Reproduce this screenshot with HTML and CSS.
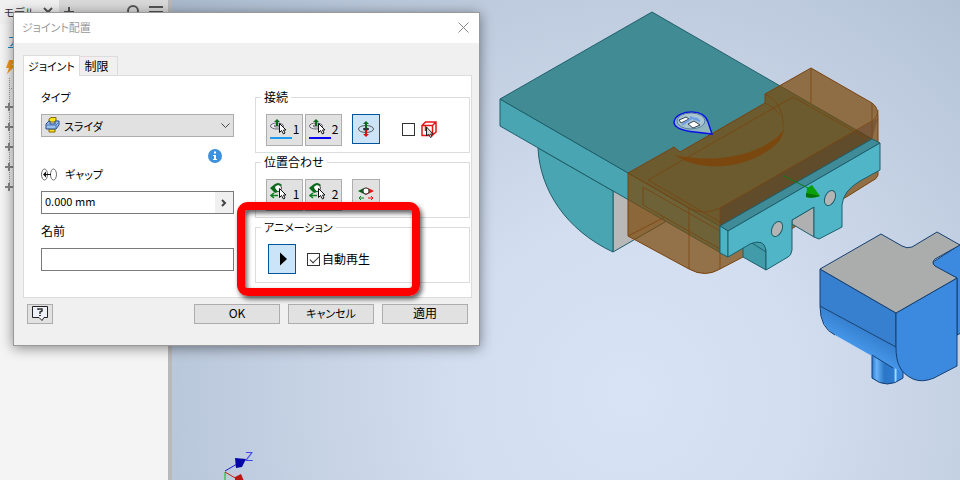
FILE: index.html
```html
<!DOCTYPE html>
<html lang="ja">
<head>
    <meta charset="UTF-8">
    <meta name="viewport" content="width=device-width, initial-scale=1.0">
    <title>ジョイント配置</title>
    <link rel="stylesheet" href="styles.css">
</head>
<body>

    <div class="app">
        <aside class="browser">
            <div class="browser-tabs">
                <div class="browser-tab">
                    <span>モデル</span>
                    <svg width="10" height="10" viewBox="0 0 10 10"><path d="M1 1l8 8M9 1L1 9" stroke="#555" stroke-width="2"/></svg>
                </div>
                <svg class="add" width="10" height="10" viewBox="0 0 10 10"><path d="M5 0v10M0 5h10" stroke="#555" stroke-width="2"/></svg>
                <svg width="14" height="16" viewBox="0 0 14 16"><circle cx="7" cy="7" r="5" fill="none" stroke="#555" stroke-width="2"/><path d="M4 11l-3 4" stroke="#555" stroke-width="2"/></svg>
                <svg width="14" height="14" viewBox="0 0 14 14"><path d="M0 2h14M0 7h14M0 12h14" stroke="#555" stroke-width="2"/></svg>
            </div>
            <a class="assembly" href="#">ア</a>
            <svg class="tree" width="16" height="140" viewBox="0 0 16 140">
                <path d="M9 0h6l-3 5h4L7 14l2-6H6z" fill="#f39a12"/>
                <path d="M9.500 18v113M9 28.500h5" stroke="#999" stroke-dasharray="1 1"/>
                <path d="M9 43v8M5 47h8M9 63v8M5 67h8M9 83v8M5 87h8M9 103v8M5 107h8M9 123v8M5 127h8" stroke="#888" stroke-width="2"/>
            </svg>
        </aside>

        <main class="viewport">
            <svg class="scene" viewBox="172 0 788 480" preserveAspectRatio="xMinYMin slice">
                <defs>
                    <linearGradient id="fillet" x1="850" y1="322" x2="838" y2="343" gradientUnits="userSpaceOnUse">
                        <stop offset="0" stop-color="#3680cf"/>
                        <stop offset="1" stop-color="#4a9cf0"/>
                    </linearGradient>
                    <linearGradient id="pin">
                        <stop offset="0" stop-color="#2c78cc"/>
                        <stop offset=".15" stop-color="#67b2f8"/>
                        <stop offset=".4" stop-color="#2b76c6"/>
                        <stop offset=".7" stop-color="#2e7bd0"/>
                        <stop offset=".76" stop-color="#9fdcff"/>
                        <stop offset=".82" stop-color="#3a8ae0"/>
                    </linearGradient>
                </defs>

                <!-- plate -->
                <g stroke="#1f5f6a" stroke-linejoin="round">
                    <path d="M613 191V252L665 222V205z" fill="#b8b8b8"/>
                    <path d="M538 148C540 190 566 230 613 252V191z" fill="#4aa5b2"/>
                    <path d="M500 99V126L728 257V231L720 226z" fill="#4aa5b2"/>
                    <path d="M652 12L500 99L720 226L872 139z" fill="#418b95"/>
                </g>

                <!-- transparent block -->
                <path d="M811 68L872 103Q878 107 878 116V175Q877 179 872 181L848 196L743 257L720 269Q705 278 689 269L628 236V173L674 147L680 152L765 103V94z" fill="#7b4808" fill-opacity=".72" stroke="#7a430f"/>
                <path d="M720 208L878 118L872 139L720 226z" fill="#4a2a20" fill-opacity=".3"/>
                <path d="M674 155C698 160 730 161 757 149C775 141 783 133 784 127C784 139 775 148 757 157C732 169 700 171 674 155z" fill="#7a480f"/>
                <g fill="none" stroke="#7a430f" stroke-opacity=".8">
                    <path d="M628 173L689 208Q705 216 720 208L872 121Q878 117 878 110M689 208V269M720 208V269"/>
                    <path d="M811 68V103M872 103V140M765 94C776 100 784 109 783 127M765 103C772 107 776 110 780 115M648 180L793 97L866 138M628 236L665 217"/>
                    <path d="M643 187V205L720 249M643 187L720 231M648 180L720 222"/>
                </g>

                <!-- bracket -->
                <g stroke="#1c5f6c" stroke-linejoin="round">
                    <path d="M792 220L814 207V237L792 224z" fill="#b0b0b0"/>
                    <path d="M743 257V242H766V270z" fill="#419ba8"/>
                    <path d="M720 226L872 139L880 143L728 231z" fill="#3f8b97"/>
                    <path d="M720 226L728 231V257L720 253z" fill="#4db3c4"/>
                    <path d="M728 231L880 143V170L860 181Q843 191 842 205V227L819 239L814 237V207L792 220V250Q791 256 788 257L766 270V250Q764 238 750 244L728 257z" fill="#50b5c6"/>
                    <path d="M752 243L766 252" fill="none"/>
                    <ellipse cx="830" cy="198" rx="5" ry="8" transform="rotate(24 830 198)" fill="#b4b4b4"/>
                    <ellipse cx="777" cy="229" rx="5" ry="8" transform="rotate(24 777 229)" fill="#b4b4b4"/>
                </g>
                <path d="M784 176L808 188" stroke="#0b7a14"/>
                <path d="M812 185L820 196Q812 199 806 197L807 188z" fill="#0aa00a"/>
                <path d="M806 193L820 196Q812 199 806 197z" fill="#087008"/>

                <!-- origin glyph -->
                <g stroke-width="1" stroke="#0a12e8" fill="#8fb5bf">
                    <path d="M674 122C675 115 684 112 692 112C700 112 706 116 708 122L712 134L695 132C684 131 674 129 674 122z" stroke-width="1.500"/>
                    <ellipse cx="691" cy="121" rx="14" ry="8" fill="#a9c6d0" stroke="#58809a"/>
                    <path d="M679 120L686 117L689 119L681 123zM688 124L694 121L700 125L693 128z" fill="#fff" stroke="#345"/>
                    <path d="M682 125L692 118L698 119M690 117L700 121" stroke="#6d9ce8" fill="none" stroke-width="2"/>
                </g>

                <!-- blue part -->
                <g stroke="#153f70" stroke-linejoin="round">
                    <path d="M872 355V378Q887 390 903 378V366z" fill="url(#pin)"/>
                    <path d="M961 244L933 262L934 266L957 278V335L961 333z" fill="#3b8ae0"/>
                    <path d="M820 306L896 347L900 370L893 368L872 356L835 335Q820 326 820 306z" fill="url(#fillet)" stroke="none"/>
                    <path d="M820 306Q820 328 835 335M872 355L893 368" fill="none"/>
                    <path d="M820 269L896 313V347L820 306z" fill="#3680cf"/>
                    <path d="M896 313L957 278V366L934 378Q922 383 913 379C900 373 896 363 896 347z" fill="#3b8ae0"/>
                    <path d="M820 269L881 234L902 246Q907 249 912 247L937 232L960 245L935 259Q931 263 935 266L957 278L896 313z" fill="#abadac"/>
                </g>

                <!-- triad -->
                <path d="M225 472V481" stroke="#0bbf0b"/>
                <path d="M225 471L237 464" stroke="#1a1acc"/>
                <path d="M225 472L237 479" stroke="#d01818"/>
                <path d="M235 458L246 459L242 467L236 468z" fill="#0505a5"/>
                <path d="M235 477L241 474L244 481H235z" fill="#bd1515"/>
                <text class="axis" x="245" y="461">Z</text>
            </svg>
        </main>

        <form class="dialog">
            <header class="titlebar">
                <h1>ジョイント配置</h1>
                <button type="button" class="close" aria-label="閉じる">
                    <svg width="11" height="11" viewBox="0 0 11 11"><path d="M.5.5l10 10M10.500.5l-10 10" stroke="#888"/></svg>
                </button>
            </header>

            <div class="tabs">
                <button type="button" class="tab active kana">ジョイント</button>
                <button type="button" class="tab">制限</button>
            </div>

            <div class="panel">
                <div class="settings">
                    <label for="type" class="kana">タイプ</label>
                    <div class="type-box">
                        <select id="type" class="kana">
                            <option>スライダ</option>
                        </select>
                        <svg class="type-icon" width="15" height="16" viewBox="0 0 15 16">
                            <path d="M4 2l2-1.500h5V5H4zM4 12h6v3H4z" fill="#ffe21a" stroke="#876a00"/>
                            <path d="M1 7l3-3h1v3h5V4h4v4l-3 4H1z" fill="#9cc0f0" stroke="#244a8c"/>
                            <path d="M1 8h10l3-3M11 8v3" fill="none" stroke="#4d77b8"/>
                        </svg>
                        <svg class="type-arrow" width="9" height="6" viewBox="0 0 9 6"><path d="M.5.5l4 4 4-4" fill="none" stroke="#444"/></svg>
                    </div>
                    <div class="info">
                        <svg width="14" height="14" viewBox="0 0 14 14"><circle cx="7" cy="7" r="7" fill="#3e91dc"/><path d="M6 2.500h2v2H6zM5 6h3v4h1v1H5v-1h1V7H5z" fill="#fff"/></svg>
                    </div>
                    <div class="gap-label">
                        <svg width="16" height="13" viewBox="0 0 16 13"><ellipse cx="3.500" cy="6.500" rx="3" ry="5.500" fill="none" stroke="#666"/><ellipse cx="12.500" cy="6.500" rx="3" ry="5.500" fill="none" stroke="#666"/><path d="M3 6.500h7" stroke="#111"/><path d="M5 3.500v6L2 6.500z" fill="#111"/></svg>
                        <label for="gap" class="kana">ギャップ</label>
                    </div>
                    <div class="gap-box">
                        <input type="text" id="gap" value="0.000 mm">
                        <button type="button" aria-label="次へ"><svg width="6" height="8" viewBox="0 0 6 8"><path d="M1 1l3 3-3 3" fill="none" stroke="#444" stroke-width="2"/></svg></button>
                    </div>
                    <label for="name">名前</label>
                    <input type="text" id="name" class="name">
                </div>

                <div class="groups">
                    <fieldset>
                        <legend>接続</legend>
                        <div class="row">
                            <button type="button" class="pick">
                                <svg width="22" height="24" viewBox="0 0 22 24">
                                    <ellipse cx="7" cy="9" rx="6.500" ry="3" fill="#eee" stroke="#667"/><ellipse cx="7" cy="9" rx="3" ry="1" fill="none" stroke="#667"/>
                                    <path d="M7 9V4" stroke="#0b6b1a" stroke-width="2"/><path d="M4 5l3-3 3 3z" fill="#0b6b1a"/>
                                    <path d="M9.500 6.500v9l2-2 2 3.500 1.500-1-1.500-3h2.500z" fill="#fff" stroke="#111"/>
                                    <path d="M0 21h22" stroke="#1e9bf0" stroke-width="2"/>
                                </svg>
                                <span>1</span>
                            </button>
                            <button type="button" class="pick">
                                <svg width="22" height="24" viewBox="0 0 22 24">
                                    <ellipse cx="7" cy="9" rx="6.500" ry="3" fill="#eee" stroke="#667"/><ellipse cx="7" cy="9" rx="3" ry="1" fill="none" stroke="#667"/>
                                    <path d="M7 9V4" stroke="#0b6b1a" stroke-width="2"/><path d="M4 5l3-3 3 3z" fill="#0b6b1a"/>
                                    <path d="M9.500 6.500v9l2-2 2 3.500 1.500-1-1.500-3h2.500z" fill="#fff" stroke="#111"/>
                                    <path d="M0 21h22" stroke="#0707f0" stroke-width="2"/>
                                </svg>
                                <span>2</span>
                            </button>
                            <button type="button" class="tool active" aria-label="反転">
                                <svg width="16" height="18" viewBox="0 0 16 18">
                                    <ellipse cx="8" cy="9" rx="7.500" ry="3.500" fill="none" stroke="#555"/><ellipse cx="8" cy="9" rx="3" ry="1.500" fill="#333"/>
                                    <path d="M8 8V3" stroke="#0b6b1a" stroke-width="2"/><path d="M5 4l3-3 3 3z" fill="#0b6b1a"/>
                                    <path d="M8 10v5" stroke="#e01010" stroke-width="2"/><path d="M5 14l3 3 3-3z" fill="#e01010"/>
                                </svg>
                            </button>
                            <label class="check">
                                <input type="checkbox" aria-label="部品を優先選択">
                                <svg width="16" height="17" viewBox="0 0 16 17">
                                    <path d="M1 4.500L4.500 1H15v10l-4 3.500H1zM1 4.500h10.500V14M11.500 4.500L15 1M4.500 4v6" fill="#fff" stroke="#e81515" stroke-width="1.500"/>
                                    <path d="M5.500 6v9l2-2 2 3.500 1.500-1-1.500-2.500h2.500z" fill="#ddd" stroke="#222"/>
                                </svg>
                            </label>
                        </div>
                    </fieldset>

                    <fieldset>
                        <legend>位置合わせ</legend>
                        <div class="row">
                            <button type="button" class="pick">
                                <svg width="22" height="24" viewBox="0 0 22 24">
                                    <circle cx="8" cy="6" r="3.500" fill="#fff" stroke="#444"/><path d="M0 6l5-4v4l3 4-3 1zM4 3q4-4 8 0l-1 1q-3-2-5 0z" fill="#0b6b1a"/>
                                    <path d="M1 13.500h7M4 11l-3 2.500L4 16" fill="none" stroke="#108020" stroke-width="1.500"/>
                                    <path d="M9.500 6.500v9l2-2 2 3.500 1.500-1-1.500-3h2.500z" fill="#fff" stroke="#111"/>
                                </svg>
                                <span>1</span>
                            </button>
                            <button type="button" class="pick">
                                <svg width="22" height="24" viewBox="0 0 22 24">
                                    <circle cx="8" cy="6" r="3.500" fill="#fff" stroke="#444"/><path d="M0 6l5-4v4l3 4-3 1zM4 3q4-4 8 0l-1 1q-3-2-5 0z" fill="#0b6b1a"/>
                                    <path d="M1 13.500h7M4 11l-3 2.500L4 16" fill="none" stroke="#108020" stroke-width="1.500"/>
                                    <path d="M9.500 6.500v9l2-2 2 3.500 1.500-1-1.500-3h2.500z" fill="#fff" stroke="#111"/>
                                </svg>
                                <span>2</span>
                            </button>
                            <button type="button" class="tool" aria-label="位置を反転">
                                <svg width="16" height="14" viewBox="0 0 16 14">
                                    <path d="M0 4l6-3q2-1 2 0v7z" fill="#0b5a1a"/><path d="M16 4l-6-3Q8 0 8 1v7z" fill="#e81515"/><circle cx="8" cy="4" r="3" fill="#fff" stroke="#444"/>
                                    <path d="M1 11h5M3 9l-2 2 2 2" fill="none" stroke="#108020"/><path d="M10 11h5M13 9l2 2-2 2" fill="none" stroke="#e81515"/>
                                </svg>
                            </button>
                        </div>
                    </fieldset>

                    <fieldset>
                        <legend class="kana">アニメーション</legend>
                        <div class="row play-row">
                            <button type="button" class="tool active" aria-label="再生">
                                <svg width="14" height="14" viewBox="0 0 14 14"><path d="M5 0.500v13L12 7z" fill="#000"/></svg>
                            </button>
                            <input type="checkbox" id="autoplay" checked>
                            <label for="autoplay">自動再生</label>
                        </div>
                    </fieldset>
                </div>
            </div>

            <footer class="actions">
                <button type="button" class="help" aria-label="ヘルプ">
                    <svg width="16" height="16" viewBox="0 0 16 16"><path d="M.5 1.500h15v11H12l-2 3-3-3H.5z" fill="#eef2f8" stroke="#222"/><path d="M6 5V4h4v2L8 7v2" fill="none" stroke="#333" stroke-width="1.500"/><path d="M7 10h2v1H7z" fill="#333"/></svg>
                </button>
                <button type="button">OK</button>
                <button type="button" class="kana">キャンセル</button>
                <button type="button">適用</button>
            </footer>
        </form>

        <div class="highlight"></div>
    </div>

</body>
</html>
```
FILE: styles.css
```css
* {
    box-sizing: border-box;
}
body {
    margin: 0;
    font-family: "Noto Sans CJK JP", sans-serif;
    font-feature-settings: "palt";
    font-size: 12px;
    line-height: 18px;
    color: #000;
}
button, input, select {
    font: inherit;
    font-feature-settings: inherit;
    color: inherit;
    margin: 0;
    padding: 0;
    border-radius: 0;
}
svg {
    display: block;
    flex: none;
}
.kana {
    font-size: 11px;
}
.app {
    position: relative;
    display: flex;
    height: 100vh;
    overflow: hidden;
}

/* model browser */
.browser {
    flex: none;
    width: 172px;
    background: #f4f4f4;
    border-right: 4px solid #b9b9b9;
    overflow: hidden;
}
.browser-tabs {
    display: flex;
    align-items: center;
    gap: 9px;
    height: 24px;
    padding-right: 5px;
    background: #d9d9d9;
}
.browser-tab {
    display: flex;
    align-items: center;
    gap: 8px;
    width: 59px;
    height: 24px;
    padding-left: 4px;
    background: #f0f0f0;
    color: #333;
    font-size: 11px;
}
.add {
    margin-left: -4px;
    margin-right: auto;
}
.assembly {
    display: block;
    width: 12px;
    margin: 8px 0 0 8px;
    color: #1a86c8;
}
.tree {
    margin-top: 10px;
}

/* 3D view */
.viewport {
    flex: 1;
    min-width: 0;
    background: radial-gradient(circle at 58% 82%, #d8e3f5 0, #d2ddef 30%, #bac8db 75%, #a9b9cc 100%);
}
.scene {
    width: 100%;
    height: 100%;
}
.axis {
    font-family: "Liberation Sans", sans-serif;
    font-size: 13px;
    fill: #4444e8;
}

/* joint dialog */
.dialog {
    position: absolute;
    left: 13px;
    top: 12px;
    width: 467px;
    background: #f0f0f0;
    border: 1px solid #999;
    box-shadow: 0 2px 12px rgba(0, 0, 0, .45);
}
.titlebar {
    display: flex;
    align-items: center;
    justify-content: space-between;
    height: 30px;
    padding: 0 10px 2px 8px;
    background: #fff;
}
.titlebar h1 {
    margin: 0;
    font-size: 11px;
    font-weight: normal;
    color: #999;
}
.close {
    border: 0;
    background: none;
}
.tabs {
    display: flex;
    align-items: flex-end;
    padding: 12px 9px 0;
}
.tab {
    height: 19px;
    padding: 0 4px;
    border: 1px solid #dcdcdc;
    border-left: 0;
    border-bottom: 0;
    background: #f0f0f0;
    line-height: 16px;
    white-space: nowrap;
}
.tab:last-child {
    width: 38px;
    padding-right: 8px;
}
.tab.active {
    position: relative;
    width: 57px;
    height: 21px;
    margin-bottom: -1px;
    border-left: 1px solid #dcdcdc;
    background: #fff;
}
.panel {
    display: flex;
    justify-content: space-between;
    margin: 0 7px 0 9px;
    padding: 12px 1px 14px 17px;
    border: 1px solid #dcdcdc;
    background: #fff;
}
.settings {
    width: 193px;
}
.settings label {
    display: block;
}
.type-box {
    position: relative;
    margin-top: 8px;
}
#type {
    display: block;
    width: 100%;
    height: 23px;
    padding-left: 22px;
    appearance: none;
    border: 1px solid #adadad;
    background: #e1e1e1;
}
.type-icon {
    position: absolute;
    left: 4px;
    top: 3px;
}
.type-arrow {
    position: absolute;
    right: 4px;
    top: 9px;
}
.info {
    display: flex;
    justify-content: flex-end;
    margin-top: 12px;
    padding-right: 12px;
}
.gap-label {
    display: flex;
    align-items: center;
    gap: 8px;
    margin-top: 2px;
}
.gap-box {
    display: flex;
    height: 23px;
    margin: 8px 0;
    border: 1px solid #7a7a7a;
}
.gap-box input {
    flex: 1;
    min-width: 0;
    padding: 0 3px 4px;
    border: 0;
    font-size: 11px;
}
.gap-box button {
    display: flex;
    align-items: center;
    justify-content: center;
    width: 18px;
    border: 0;
    background: #f0f0f0;
}
.name {
    width: 100%;
    height: 23px;
    margin-top: 8px;
    padding: 0 3px;
    border: 1px solid #7a7a7a;
}
.groups {
    width: 215px;
}
fieldset {
    min-width: 0;
    min-height: 65px;
    margin: 0;
    padding: 8px 10px 6px;
    border: 1px solid #dcdcdc;
}
legend {
    margin-left: -5px;
    padding: 0 3px;
}
.row {
    display: flex;
    align-items: flex-start;
    gap: 2px;
}
.pick, .tool {
    display: flex;
    align-items: center;
    justify-content: center;
    border: 1px solid #adadad;
    background: #e1e1e1;
}
.pick {
    width: 37px;
    height: 32px;
    gap: 1px;
    padding-bottom: 2px;
}
.tool {
    width: 28px;
    height: 30px;
}
.pick + .tool {
    margin-left: 8px;
}
.tool.active {
    border-color: #005499;
    background: #cce4f7;
}
input[type="checkbox"] {
    flex: none;
    width: 13px;
    height: 13px;
    appearance: none;
    border: 1px solid #333;
    background: #fff;
}
input[type="checkbox"]:checked::after {
    content: "";
    display: block;
    width: 8px;
    height: 4px;
    margin: 2px 0 0 2px;
    border: solid #333;
    border-width: 0 0 1px 1px;
    transform: rotate(-45deg);
}
.check {
    display: flex;
    align-items: center;
    gap: 6px;
    height: 30px;
    margin-left: 20px;
}
.play-row {
    align-items: center;
    padding-left: 2px;
}
.play-row input {
    margin-left: 9px;
}
.actions {
    display: flex;
    gap: 8px;
    padding: 6px 11px 21px 13px;
}
.actions button {
    display: flex;
    align-items: center;
    justify-content: center;
    width: 86px;
    height: 20px;
    padding-bottom: 2px;
    border: 1px solid #adadad;
    background: #e1e1e1;
}
.actions .help {
    width: 26px;
    margin-right: auto;
}

/* red frame over the animation group */
.highlight {
    position: absolute;
    left: 237px;
    top: 202px;
    width: 183px;
    height: 94px;
    border: 8px solid #f00;
    border-radius: 11px;
    box-shadow: 2px 3px 5px rgba(0, 0, 0, .65), inset 2px 3px 5px rgba(0, 0, 0, .65);
    pointer-events: none;
}
```
